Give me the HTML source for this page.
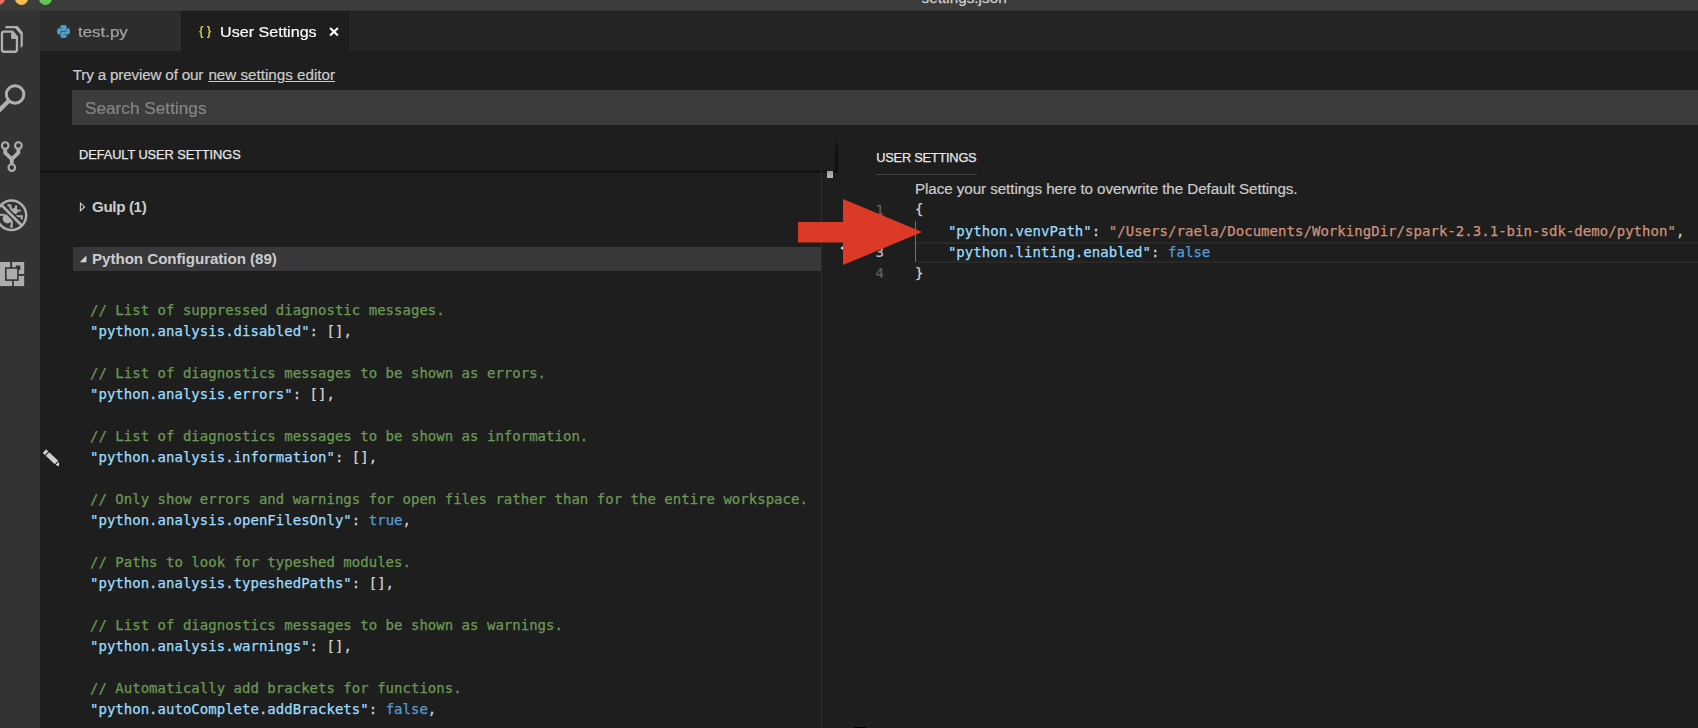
<!DOCTYPE html>
<html lang="en">
<head>
<meta charset="utf-8">
<title>settings.json</title>
<style>
*{box-sizing:border-box;margin:0;padding:0}
html,body{width:1698px;height:728px;overflow:hidden;background:#1e1e1e}
body{position:relative;font-family:"Liberation Sans",sans-serif;color:#cccccc;-webkit-font-smoothing:antialiased}
.abs{position:absolute;white-space:pre}
#titlebar{left:0;top:0;width:1698px;height:11px;background:linear-gradient(#3c3c3c 0,#3c3c3c 8.5px,#404040 9.5px,#383838 10.3px,#2c2c2c 11px)}
#title{left:921.6px;top:-12px;transform:translateY(0.55px);font-size:15.2px;line-height:18px;color:#d0d0d0;-webkit-text-stroke:0.25px #d0d0d0;letter-spacing:0.05px}
.tl{position:absolute;width:13px;height:13px;border-radius:50%;top:-8px}
#activity{left:0;top:11px;width:40px;height:717px;background:#333333}
#tabbar{left:40px;top:11px;width:1658px;height:40px;background:#252526}
#tab1{left:40px;top:11px;width:141px;height:40px;background:#2d2d2d}
#tab2{left:181px;top:11px;width:168px;height:40px;background:#1e1e1e}
.ui{font-size:15.2px;line-height:20px;-webkit-text-stroke:0.2px currentColor}
.mono{font-family:"DejaVu Sans Mono","Liberation Mono",monospace;font-size:14px;line-height:21px;color:#d4d4d4;-webkit-text-stroke:0.25px currentColor}
.c{color:#6a9955}
.k{color:#9cdcfe}
.s{color:#ce9178}
.b{color:#569cd6}
#search{left:72px;top:90px;width:1626px;height:35px;background:#3c3c3c}
#lhead{left:40px;top:169.5px;width:798px;height:3px;background:linear-gradient(to bottom,rgba(0,0,0,0),rgba(0,0,0,.48) 50%,rgba(0,0,0,.3) 75%,rgba(0,0,0,0))}
#lheadr{left:833.5px;top:139px;width:4.5px;height:32.5px;background:linear-gradient(to right,rgba(0,0,0,0),rgba(0,0,0,.5) 70%,rgba(0,0,0,.5));-webkit-mask-image:linear-gradient(to bottom,transparent,#000 12px);mask-image:linear-gradient(to bottom,transparent,#000 12px)}
#vline{left:821px;top:170px;width:1px;height:558px;background:#2c2c2c}
#rowhl{left:73px;top:246.5px;width:748px;height:24.5px;background:#38383b}
</style>
</head>
<body>
<div id="titlebar" class="abs"></div>
<div id="title" class="abs">settings.json</div>
<div class="tl" style="left:-8px;background:#ee6a5e"></div>
<div class="tl" style="left:15px;background:#f5bf4f"></div>
<div class="tl" style="left:39px;background:#62c554"></div>

<div id="tabbar" class="abs"></div>
<div id="tab1" class="abs"></div>
<div id="tab2" class="abs"></div>
<div id="activity" class="abs"></div>


<!-- activity bar icons -->
<svg class="abs" style="left:0;top:0" width="40" height="728" viewBox="0 0 40 728" fill="none">
<g stroke="#b0b0b0" fill="none">
<!-- files -->
<path d="M3.9 31.55H12.4L16.95 36.9V49.8Q16.95 51.75 15 51.75H3.9Q1.95 51.75 1.95 49.8V33.5Q1.95 31.55 3.9 31.55Z" stroke-width="2.3"/>
<path d="M11.7 31.6V38.4H17Z" fill="#b0b0b0" stroke-width="1"/>
<path d="M6.3 26H17.6L22.8 32.3V46L20.6 48.2V34.6L15.2 28.2H5.2Q5.2 26 6.3 26Z" fill="#b0b0b0" stroke="none"/>
<!-- search -->
<circle cx="15.1" cy="94.4" r="8.75" stroke-width="3"/>
<path d="M8.9 100.7L-2 111.5" stroke-width="4.2"/>
<!-- git -->
<circle cx="5.2" cy="145.6" r="3.3" stroke-width="2.1"/>
<circle cx="18.4" cy="145.6" r="3.3" stroke-width="2.1"/>
<circle cx="11.8" cy="167.6" r="3.3" stroke-width="2.1"/>
<path d="M5.2 149.5V152.8L11.8 159.2V163.8M18.4 149.5V152.8L11.8 159.2" stroke-width="3.8" stroke-linejoin="miter"/>
</g>
<g fill="#b0b0b0" stroke="#b0b0b0" stroke-width="1.6" stroke-linecap="butt">
<circle cx="7.5" cy="218.7" r="4.8" stroke="none"/>
<circle cx="14.7" cy="211" r="3.1" stroke="none"/>
<path d="M7.5 205.3H10.1L11.2 211" fill="none" stroke-width="2.3"/>
<path d="M16.3 205.5L15.5 209" fill="none" stroke-width="2.2"/>
<path d="M16 210.6H20.8" fill="none" stroke-width="1.8"/>
<path d="M15.5 216.2H21.8V219.6" fill="none" stroke-width="2"/>
<path d="M11.8 221V226.6H10" fill="none" stroke-width="2"/>
<path d="M0 214.8H4.5" fill="none" stroke-width="2"/>
</g>
<path d="M1.5 205.2L21.5 225.2" stroke="#333333" stroke-width="6"/>
<circle cx="11.5" cy="215.2" r="14.7" stroke-width="2.5" stroke="#b0b0b0"/>
<path d="M0.8 204.5L22 225.7" stroke="#b0b0b0" stroke-width="2.7"/>
<!-- extensions -->
<rect x="-1" y="262" width="25.2" height="24.1" fill="#adadad"/>
<rect x="10.2" y="261" width="1.9" height="7" fill="#333333"/>
<rect x="18" y="274" width="7" height="1.9" fill="#333333"/>
<rect x="12.1" y="280" width="1.7" height="7" fill="#333333"/>
<rect x="15.9" y="265.5" width="4.4" height="4.5" fill="#333333"/>
<rect x="5.8" y="268" width="12.1" height="12.1" fill="#adadad" stroke="#333333" stroke-width="1.6"/>
</svg>

<!-- python file icon -->
<svg class="abs" style="left:57.1px;top:25.3px" width="13.1" height="12.9" viewBox="0 0 13 13">
<g fill="#4f9fc8">
<path id="py" d="M6.45 0C3.15 0 3.35 1.43 3.35 1.43V2.92H6.5V3.37H2.1C2.1 3.37 0 3.13 0 6.46C0 9.79 1.84 9.67 1.84 9.67H2.95V8.12C2.95 8.12 2.89 6.27 4.76 6.27H7.89C7.89 6.27 9.64 6.3 9.64 4.58V1.74C9.64 1.74 9.91 0 6.45 0Z"/>
<path d="M6.45 0C3.15 0 3.35 1.43 3.35 1.43V2.92H6.5V3.37H2.1C2.1 3.37 0 3.13 0 6.46C0 9.79 1.84 9.67 1.84 9.67H2.95V8.12C2.95 8.12 2.89 6.27 4.76 6.27H7.89C7.89 6.27 9.64 6.3 9.64 4.58V1.74C9.64 1.74 9.91 0 6.45 0Z" transform="rotate(180 6.5 6.5)"/>
</g>
</svg>

<!-- close X -->
<svg class="abs" style="left:326px;top:24px" width="16" height="16" viewBox="326 24 16 16">
<path d="M330.1 27.9L337.9 35.5M337.9 27.9L330.1 35.5" stroke="#ffffff" stroke-width="2.1"/>
</svg>



<!-- edit pencil -->
<svg class="abs" style="left:40px;top:445px" width="24" height="24" viewBox="40 445 24 24">
<g transform="translate(44.4 451.1) rotate(43.3)" fill="#d0d0d0">
<rect x="0" y="-2.45" width="3.1" height="4.9"/>
<rect x="4.2" y="-2.45" width="12.4" height="4.9"/>
<path d="M17.8 -2L21 0.9L17.8 2.4Z" fill="#ececec"/>
</g>
</svg>

<!-- tab labels -->
<div id="t_test" class="abs ui" style="transform:scaleX(1.113);transform-origin:0 0;left:78px;top:22px;color:#a4a4a4">test.py</div>
<div id="t_brace" class="abs" style="left:198.9px;top:20.5px;font-size:13.1px;line-height:20px;font-weight:bold;transform:scaleX(.885);transform-origin:0 0;color:#cbcb41">{ }</div>
<div id="t_user" class="abs ui" style="transform:scaleX(1.06);transform-origin:0 0;left:219.5px;top:22px;color:#ffffff">User Settings</div>

<!-- header row -->
<div id="t_try" class="abs ui" style="letter-spacing:-0.16px;left:72.8px;top:65px">Try a preview of our </div><div id="t_link" class="abs ui" style="letter-spacing:0.0px;left:208.4px;top:65px;text-decoration:underline">new settings editor</div>
<div id="search" class="abs"></div>
<div id="t_search" class="abs" style="transform:scaleX(1.057);transform-origin:0 0;left:85px;top:97px;font-size:16.3px;line-height:22px;color:#858585;-webkit-text-stroke:0.2px #858585">Search Settings</div>

<!-- left pane -->
<div id="lhead" class="abs"></div>
<div id="lheadr" class="abs"></div>
<div id="t_default" class="abs" style="letter-spacing:-0.07px;left:79px;top:146.5px;font-size:12.8px;line-height:16px;color:#e7e7e7;-webkit-text-stroke:0.25px #e7e7e7">DEFAULT USER SETTINGS</div>
<div id="vline" class="abs"></div>
<div class="abs" style="left:827px;top:171px;width:5.5px;height:7px;background:linear-gradient(#9c9c9c,#b8b8b8)"></div>
<div id="t_gulp" class="abs ui" style="letter-spacing:-0.38px;left:92px;top:196.7px;font-weight:bold;-webkit-text-stroke:0">Gulp (1)</div>
<div id="rowhl" class="abs"></div>
<div id="t_pyconf" class="abs ui" style="letter-spacing:-0.065px;left:92px;top:249.2px;font-weight:bold;-webkit-text-stroke:0">Python Configuration (89)</div>

<!-- twisties -->
<svg class="abs" style="left:76px;top:198px" width="14" height="70" viewBox="76 198 14 70">
<path d="M80.4 203.1L84.6 206.9L80.4 210.7Z" fill="none" stroke="#d0d0d0" stroke-width="1.1"/>
<path d="M86.4 255.5V262.2H79.8Z" fill="#d4d4d4"/>
</svg>
<div class="abs mono" style="left:90px;top:300px;letter-spacing:0.017px"><span class="c">// List of suppressed diagnostic messages.</span>
<span class="k">"python.analysis.disabled"</span>: [],

<span class="c">// List of diagnostics messages to be shown as errors.</span>
<span class="k">"python.analysis.errors"</span>: [],

<span class="c">// List of diagnostics messages to be shown as information.</span>
<span class="k">"python.analysis.information"</span>: [],

<span class="c">// Only show errors and warnings for open files rather than for the entire workspace.</span>
<span class="k">"python.analysis.openFilesOnly"</span>: <span class="b">true</span>,

<span class="c">// Paths to look for typeshed modules.</span>
<span class="k">"python.analysis.typeshedPaths"</span>: [],

<span class="c">// List of diagnostics messages to be shown as warnings.</span>
<span class="k">"python.analysis.warnings"</span>: [],

<span class="c">// Automatically add brackets for functions.</span>
<span class="k">"python.autoComplete.addBrackets"</span>: <span class="b">false</span>,</div>

<!-- right pane -->
<div id="t_usr2" class="abs" style="letter-spacing:-0.23px;left:876.3px;top:150px;font-size:12.8px;line-height:16px;color:#e7e7e7;-webkit-text-stroke:0.25px #e7e7e7">USER SETTINGS</div>
<div class="abs" style="left:876px;top:174px;width:101px;height:1px;background:#424242"></div>
<div id="t_place" class="abs ui" style="letter-spacing:-0.07px;left:915px;top:178.8px">Place your settings here to overwrite the Default Settings.</div>
<div class="abs" style="left:916px;top:242px;width:782px;height:2px;background:#282828"></div>
<div class="abs" style="left:916px;top:261px;width:782px;height:2px;background:#282828"></div>
<div class="abs" style="left:915px;top:221px;width:1px;height:41px;background:#707070"></div>
<div class="abs mono" style="left:875.5px;top:200px;color:#636363;-webkit-text-stroke:0.1px #636363">1
2
<span style="color:#b8b8b8;-webkit-text-stroke:0.25px #b8b8b8">3</span>
4</div>
<div class="abs mono" style="left:915px;top:199px">{</div>
<div class="abs mono" style="left:914px;top:221px;letter-spacing:0.037px">    <span class="k">"python.venvPath"</span>: <span class="s">"/Users/raela/Documents/WorkingDir/spark-2.3.1-bin-sdk-demo/python"</span>,
    <span class="k">"python.linting.enabled"</span>: <span class="b">false</span></div>
<div class="abs mono" style="left:915px;top:262.5px">}</div>

<!-- red arrow -->
<svg class="abs" style="left:790px;top:190px" width="140" height="90" viewBox="790 190 140 90">
<path d="M840.3 248.1L843.4 245.9V250.3Z" fill="#e0e0e0"/>
<polygon points="798,222 843,222 843,199 922,232 843,265 843,242.5 798,242.5" fill="#dc3a26"/>
</svg>
<div class="abs" style="left:854px;top:727px;width:12px;height:1px;background:#000"></div>
</body>
</html>
